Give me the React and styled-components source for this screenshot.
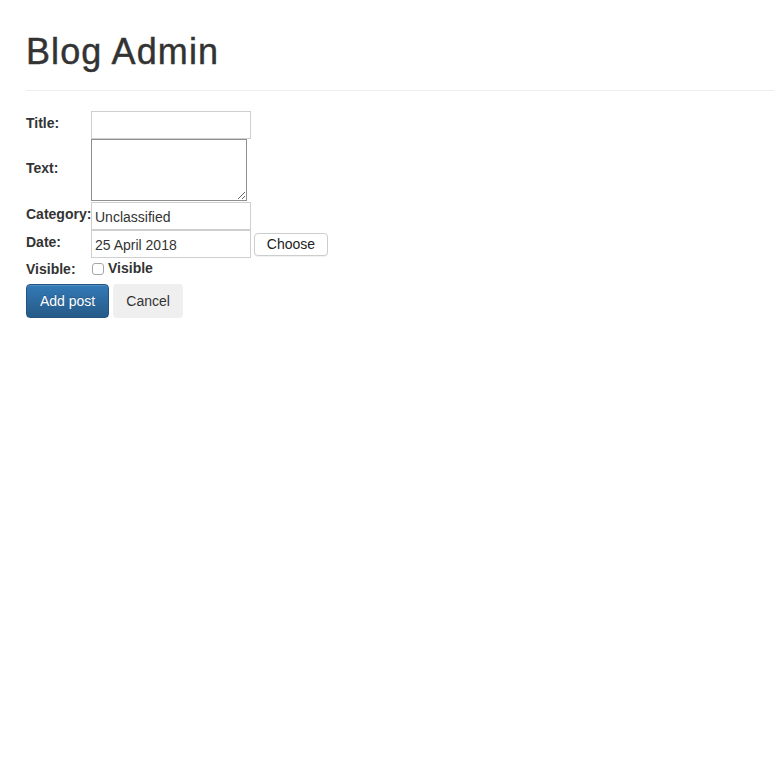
import React from "react";
import styled, { createGlobalStyle } from "styled-components";

const Global = createGlobalStyle`
  html, body { margin: 0; padding: 0; background: #fff; }
  body {
    font-family: "Liberation Sans", Arial, Helvetica, sans-serif;
    font-size: 14px;
    line-height: 1.42857;
    color: #333;
  }
`;

const Page = styled.div`
  padding: 32px 0 0 26px;
`;

const Header = styled.header`
  padding-bottom: 8px;
  border-bottom: 1px solid #eee;
  margin-bottom: 20px;
`;

const Title = styled.h1`
  margin: 0 0 10px;
  font-size: 36px;
  font-weight: 500;
  line-height: 40px;
  letter-spacing: 1.1px;
  color: #333;
  -webkit-text-stroke: 0.45px #333;
`;

const Form = styled.form`
  display: grid;
  grid-template-columns: 65px auto;
  align-items: center;
  justify-items: start;
`;

const Label = styled.label`
  font-weight: bold;
  font-size: 14px;
  line-height: 20px;
  margin-bottom: ${(p) => (p.$flat ? "0" : "5px")};
  white-space: nowrap;
`;

const Field = styled.div`
  display: flex;
  align-items: center;
  gap: 3px;
  margin-bottom: ${(p) => p.$gap || 0}px;
`;

const TextInput = styled.input`
  box-sizing: border-box;
  width: 160px;
  height: 28px;
  margin: 0;
  padding: 2px 3px 0;
  border: 1px solid #cfcfcf;
  font-family: inherit;
  font-size: 14px;
  color: #333;
  background: #fff;
  outline: none;
`;

const TextArea = styled.textarea`
  box-sizing: border-box;
  display: block;
  width: 156px;
  height: 62px;
  margin: 0;
  padding: 2px 3px;
  border: 1px solid #8f8f8f;
  font-family: inherit;
  font-size: 14px;
  color: #333;
  background: #fff;
  outline: none;
  resize: both;
`;

const SmallButton = styled.button`
  box-sizing: border-box;
  width: 74px;
  height: 23px;
  padding: 0 6px;
  border: 1px solid #cdcdcd;
  border-radius: 4px;
  background: #fff;
  font-family: inherit;
  font-size: 14px;
  color: #222;
  box-shadow: 0 1px 1px rgba(0, 0, 0, 0.06);
`;

const CheckRow = styled.label`
  display: flex;
  align-items: center;
  height: 21px;
  font-weight: bold;
  font-size: 14px;
`;

const Check = styled.input`
  appearance: none;
  box-sizing: border-box;
  width: 12px;
  height: 12px;
  margin: 0 4px 0 1px;
  border: 1px solid #a6a6a6;
  border-radius: 3px;
  background: #fff;
`;

const Actions = styled.div`
  grid-column: 1 / -1;
  display: flex;
  gap: 4px;
  margin-top: 5px;
`;

const Button = styled.button`
  box-sizing: border-box;
  height: 34px;
  padding: 6px ${(p) => (p.$primary ? "13px" : "12px")};
  border-radius: 4px;
  font-family: inherit;
  font-size: 14px;
  line-height: 20px;
  cursor: pointer;
  border: 1px solid ${(p) => (p.$primary ? "#245580" : "transparent")};
  color: ${(p) => (p.$primary ? "#fff" : "#333")};
  background: ${(p) =>
    p.$primary ? "linear-gradient(to bottom, #337ab7 0%, #265a88 100%)" : "#efefef"};
  text-shadow: ${(p) => (p.$primary ? "0 -1px 0 rgba(0,0,0,0.2)" : "none")};
  box-shadow: ${(p) =>
    p.$primary ? "inset 0 1px 0 rgba(255,255,255,0.15), 0 1px 1px rgba(0,0,0,0.075)" : "none"};
`;

export default function App() {
  return (
    <Page>
      <Global />
      <Header>
        <Title>Blog Admin</Title>
      </Header>
      <Form onSubmit={(e) => e.preventDefault()}>
        <Label htmlFor="title">Title:</Label>
        <Field>
          <TextInput id="title" type="text" />
        </Field>

        <Label htmlFor="text">Text:</Label>
        <Field $gap={1}>
          <TextArea id="text" />
        </Field>

        <Label htmlFor="category">Category:</Label>
        <Field>
          <TextInput id="category" type="text" defaultValue="Unclassified" />
        </Field>

        <Label htmlFor="date">Date:</Label>
        <Field>
          <TextInput id="date" type="text" defaultValue="25 April 2018" />
          <SmallButton type="button">Choose</SmallButton>
        </Field>

        <Label $flat>Visible:</Label>
        <CheckRow>
          <Check type="checkbox" />
          Visible
        </CheckRow>

        <Actions>
          <Button $primary type="submit">Add post</Button>
          <Button type="button">Cancel</Button>
        </Actions>
      </Form>
    </Page>
  );
}
